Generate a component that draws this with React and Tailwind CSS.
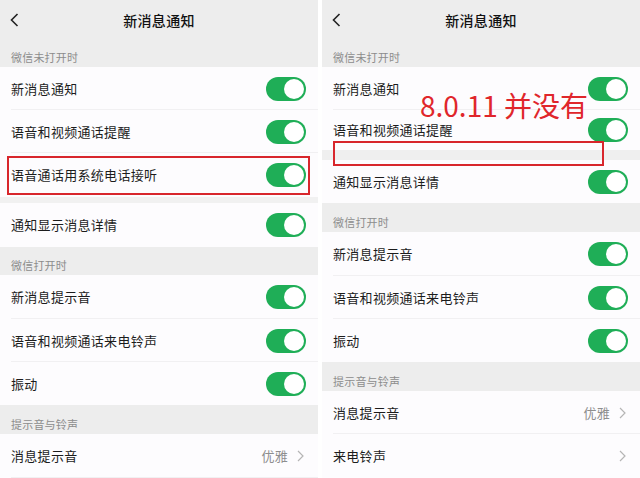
import React from "react";

const FONT = { fontFamily: '"Noto Sans CJK SC", "Noto Sans", sans-serif' };

function Toggle() {
  return (
    <div className="w-[40px] h-[24px] rounded-full bg-[#1fae57] p-[2px] flex justify-end">
      <div className="w-[20px] h-[20px] rounded-full bg-white" />
    </div>
  );
}

function Chevron() {
  return (
    <svg width="7" height="12" viewBox="0 0 7 12" fill="none">
      <path d="M1 1l5 5-5 5" stroke="#b5b5b5" strokeWidth="1.2" />
    </svg>
  );
}

function NavBar() {
  return (
    <div className="h-[40px] relative flex items-center justify-center bg-[#ededed]">
      <svg
        className="absolute left-[10px] top-[13px]"
        width="9"
        height="14"
        viewBox="0 0 9 14"
        fill="none"
      >
        <path d="M7.5 1L1.5 7l6 6" stroke="#222" strokeWidth="1.6" />
      </svg>
      <span className="text-[14px] font-medium tracking-[0.3px] text-[#111]">新消息通知</span>
    </div>
  );
}

function Section({ title, h }) {
  return (
    <div
      className={`flex items-end pl-[11px] pb-[2px] bg-[#ededed] text-[11px] leading-[16px] tracking-[0.2px] text-[#8c8c8c] ${h}`}
    >
      {title}
    </div>
  );
}

function Row({ label, h = "h-[43px]", value, arrow, toggle = true, line = true }) {
  return (
    <div className={`relative flex items-center justify-between pl-[11px] pr-[12px] bg-[#fdfcfe] ${h}`}>
      <span className="text-[13px] tracking-[0.3px] text-[#1c1c1c]">{label}</span>
      {toggle && <Toggle />}
      {arrow && (
        <div className="flex items-center gap-[9px] pr-[2px] text-[13px] tracking-[0.3px] text-[#8e8e8e]">
          {value && <span>{value}</span>}
          <Chevron />
        </div>
      )}
      {line && <div className="absolute left-[11px] right-0 bottom-0 h-px bg-[#f1f0f2]" />}
    </div>
  );
}

function LeftPanel() {
  return (
    <div className="relative w-[318px] h-full flex flex-col">
      <NavBar />
      <Section title="微信未打开时" h="h-[27px]" />
      <Row label="新消息通知" />
      <Row label="语音和视频通话提醒" />
      <Row label="语音通话用系统电话接听" h="h-[44px]" line={false} />
      <div className="h-[6px] bg-[#f1f1f1]" />
      <Row label="通知显示消息详情" h="h-[44px]" line={false} />
      <Section title="微信打开时" h="h-[28px]" />
      <Row label="新消息提示音" h="h-[44px]" />
      <Row label="语音和视频通话来电铃声" />
      <Row label="振动" line={false} />
      <Section title="提示音与铃声" h="h-[29px]" />
      <Row label="消息提示音" h="h-[44px]" toggle={false} arrow value="优雅" />
      {/* annotation box */}
      <div className="absolute left-[7px] top-[156px] w-[303px] h-[39px] border-2 border-[#d8262c]" />
    </div>
  );
}

function RightPanel() {
  return (
    <div className="relative w-[318px] h-full flex flex-col">
      <NavBar />
      <Section title="微信未打开时" h="h-[27px]" />
      <Row label="新消息通知" />
      <Row label="语音和视频通话提醒" h="h-[40px]" line={false} />
      <div className="h-[10px] bg-[#efefef]" />
      <Row label="通知显示消息详情" line={false} />
      <Section title="微信打开时" h="h-[29px]" />
      <Row label="新消息提示音" h="h-[44px]" />
      <Row label="语音和视频通话来电铃声" />
      <Row label="振动" line={false} />
      <Section title="提示音与铃声" h="h-[29px]" />
      <Row label="消息提示音" toggle={false} arrow value="优雅" />
      <Row label="来电铃声" h="h-[44px]" toggle={false} arrow line={false} />
      {/* annotations */}
      <div className="absolute left-[11px] top-[141px] w-[271px] h-[25px] border-2 border-[#d8262c]" />
      <div className="absolute left-[98px] top-[91px] text-[28px] leading-[28px] text-[#e0262b] whitespace-nowrap">
        8.0.11 并没有
      </div>
    </div>
  );
}

export default function App() {
  return (
    <div className="w-[640px] h-[478px] flex justify-between bg-white overflow-hidden" style={FONT}>
      <LeftPanel />
      <RightPanel />
    </div>
  );
}
